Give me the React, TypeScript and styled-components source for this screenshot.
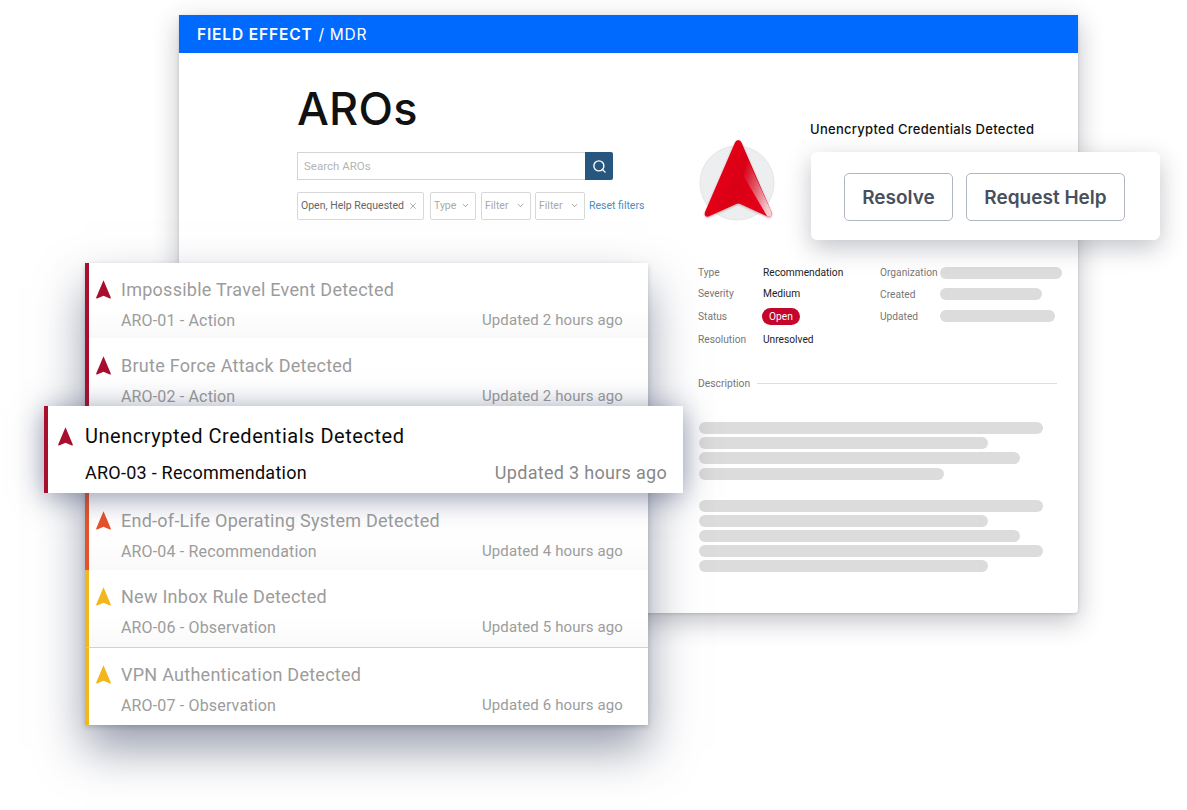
import React from "react";
import styled, { createGlobalStyle } from "styled-components";
import { ChevronDown, Search, X } from "lucide-react";

const Global = createGlobalStyle`
  html, body { margin: 0; padding: 0; background: #fff; }
  * { box-sizing: border-box; }
`;

const Page = styled.div`
  position: relative;
  width: 1187px;
  height: 810px;
  overflow: hidden;
  background: #fff;
  padding: 15px 0 0 179px;
  font-family: Roboto, "Liberation Sans", sans-serif;
`;

const Window = styled.section`
  position: relative;
  width: 899px;
  height: 598px;
  background: #fff;
  border-radius: 0 0 4px 4px;
  box-shadow: 0 8px 26px rgba(40, 44, 60, 0.3), 0 1px 3px rgba(40, 44, 60, 0.16);
`;

const Header = styled.header`
  height: 38px;
  background: #006aff;
  color: #fff;
  display: flex;
  align-items: center;
  gap: 6px;
  padding-left: 18px;
  font-family: Inter, sans-serif;
  font-size: 15.5px;
`;

const Brand = styled.span`
  font-weight: 600;
  letter-spacing: 0.85px;
`;

const Product = styled.span`
  font-weight: 400;
  letter-spacing: 0.7px;
`;

const Body = styled.div`
  display: flex;
  padding-left: 118px;
`;

const LeftColumn = styled.div`
  width: 401px;
  flex: none;
`;

const Title = styled.h1`
  margin: 27px 0 0;
  font-family: Inter, sans-serif;
  font-weight: 500;
  font-size: 45px;
  line-height: 58px;
  letter-spacing: 0.2px;
  color: #111;
`;

const SearchBar = styled.div`
  display: flex;
  width: 316px;
  height: 28px;
  margin-top: 14px;
`;

const SearchInput = styled.div`
  flex: 1;
  border: 1px solid #d4d4d4;
  border-right: 0;
  display: flex;
  align-items: center;
  padding-left: 6px;
  font-size: 11.5px;
  color: #b4b4b4;
`;

const SearchButton = styled.div`
  width: 28px;
  background: #27567f;
  border-radius: 0 2px 2px 0;
  color: #fff;
  display: flex;
  align-items: center;
  justify-content: center;
`;

const FilterRow = styled.div`
  display: flex;
  align-items: center;
  margin-top: 12px;
  height: 28px;
`;

const Dropdown = styled.div<{ $w: number; $gap: number; $active?: boolean }>`
  width: ${(p) => p.$w}px;
  margin-right: ${(p) => p.$gap}px;
  height: 28px;
  border: 1px solid #d8d8d8;
  border-radius: 2px;
  display: flex;
  align-items: center;
  justify-content: space-between;
  padding: 0 5px 1px 3px;
  font-size: 10.5px;
  color: ${(p) => (p.$active ? "#666" : "#a8a8a8")};
  white-space: nowrap;
  svg { color: #888; flex: none; }
`;

const ResetLink = styled.span`
  font-size: 10.5px;
  color: #4a8cc4;
  white-space: nowrap;
  padding-bottom: 1px;
`;

const RightColumn = styled.div`
  flex: 1;
  position: relative;
`;

const DetailHeading = styled.h2`
  margin: 68px 0 0 112px;
  font-family: Inter, sans-serif;
  font-size: 13px;
  line-height: 16px;
  font-weight: 500;
  letter-spacing: 0.28px;
  color: #111;
  white-space: nowrap;
`;

const Avatar = styled.svg`
  display: block;
  margin: 2px 0 0 0;
`;

const MetaGrid = styled.div`
  display: flex;
  margin-top: 38px;
`;

const MetaColumn = styled.div`
  width: 182px;
  display: flex;
  flex-direction: column;
`;

const MetaRow = styled.div<{ $h: number }>`
  height: ${(p) => p.$h}px;
  display: flex;
  align-items: center;
  font-size: 10.2px;
`;

const MetaLabel = styled.span<{ $w: number }>`
  width: ${(p) => p.$w}px;
  flex: none;
  color: #777;
`;

const MetaValue = styled.span`
  color: #222;
`;

const StatusPill = styled.span`
  height: 17px;
  margin-left: -1px;
  padding: 0 7px;
  border-radius: 9px;
  background: #c4062c;
  color: #fff;
  display: flex;
  align-items: center;
`;

const Skeleton = styled.div<{ $w: number }>`
  width: ${(p) => p.$w}px;
  height: 12px;
  border-radius: 6px;
  background: #dcdcdc;
`;

const DescriptionHeading = styled.div`
  display: flex;
  align-items: center;
  gap: 7px;
  width: 359px;
  margin-top: 25px;
  height: 14px;
  font-size: 10.3px;
  color: #777;
  &::after {
    content: "";
    flex: 1;
    height: 1px;
    background: #dedede;
  }
`;

const SkeletonGroup = styled.div<{ $top: number }>`
  margin: ${(p) => p.$top}px 0 0 1px;
  display: flex;
  flex-direction: column;
  gap: 3.2px;
`;

const ActionCard = styled.div`
  position: absolute;
  left: 632px;
  top: 137px;
  width: 349px;
  height: 88px;
  background: #fff;
  border-radius: 6px;
  box-shadow: 0 8px 24px rgba(40, 44, 60, 0.28);
  display: flex;
  align-items: center;
  gap: 13px;
  padding: 2px 0 0 33px;
`;

const ActionButton = styled.div<{ $w: number }>`
  width: ${(p) => p.$w}px;
  height: 48px;
  border: 1px solid #b0b6bf;
  border-radius: 5px;
  display: flex;
  align-items: center;
  justify-content: center;
  font-family: Inter, sans-serif;
  font-size: 19px;
  font-weight: 600;
  color: #47505e;
`;

const List = styled.div`
  position: absolute;
  left: 85px;
  top: 263px;
  width: 563px;
  display: flex;
  flex-direction: column;
  background: #fff;
  box-shadow: 0 24px 44px rgba(50, 60, 90, 0.5), 0 2px 5px rgba(50, 60, 90, 0.24);
`;

const Row = styled.div<{ $h: number; $bar: string; $top: number; $tint?: boolean; $rule?: boolean }>`
  height: ${(p) => p.$h}px;
  border-left: 4px solid ${(p) => p.$bar};
  border-top: ${(p) => (p.$rule ? "1px solid #d2d2d2" : "0")};
  background: ${(p) => (p.$tint ? "linear-gradient(#fff 60%, #f9f9f9)" : "#fff")};
  display: grid;
  grid-template-columns: 25px 1fr auto;
  grid-template-rows: 31px 30px;
  align-content: start;
  align-items: center;
  padding: ${(p) => p.$top}px 25px 0 7px;
  color: #9c9c9c;
`;

const SelectedRow = styled.div`
  position: relative;
  z-index: 2;
  height: 87px;
  margin: -9px -35px 0 -41px;
  border-left: 4px solid #a80f2f;
  background: #fff;
  display: grid;
  grid-template-columns: 27px 1fr auto;
  grid-template-rows: 36px 36px;
  align-content: start;
  align-items: center;
  padding: 12px 16px 0 10px;
  box-shadow: 0 4px 28px rgba(50, 60, 100, 0.55);
`;

const RowTitle = styled.div`
  grid-column: 2 / 4;
  font-size: 18px;
  letter-spacing: 0.26px;
`;

const RowSub = styled.div`
  grid-column: 2;
  font-size: 16px;
  letter-spacing: 0.16px;
`;

const RowTime = styled.div`
  grid-column: 3;
  font-size: 15px;
  letter-spacing: 0.12px;
`;

const SelectedTitle = styled.div`
  grid-column: 2 / 4;
  font-size: 20px;
  letter-spacing: 0.53px;
  color: #0a0a0a;
`;

const SelectedSub = styled.div`
  grid-column: 2;
  font-size: 18px;
  letter-spacing: 0.25px;
  color: #0a0a0a;
`;

const SelectedTime = styled.div`
  grid-column: 3;
  font-size: 18px;
  letter-spacing: 0.3px;
  color: #888;
`;

const ArrowSvg = styled.svg`
  display: block;
`;

const Arrow = ({ color }: { color: string }) => (
  <ArrowSvg width="15" height="19" viewBox="0 0 15 19">
    <path
      d="M7.5 0.3 L14.8 17.6 Q15 18.8 13.9 18.4 L8 15.9 Q7.5 15.7 7 15.9 L1.1 18.4 Q0 18.8 0.2 17.6 Z"
      fill={color}
    />
  </ArrowSvg>
);

const DARK = "#a80f2f";
const ORANGE = "#e5532a";
const YELLOW = "#f2b71c";

const META_LEFT: [string, React.ReactNode, number][] = [
  ["Type", <MetaValue>Recommendation</MetaValue>, 20],
  ["Severity", <MetaValue>Medium</MetaValue>, 23],
  ["Status", <StatusPill>Open</StatusPill>, 23],
  ["Resolution", <MetaValue>Unresolved</MetaValue>, 23],
];

const META_RIGHT: [string, number, number][] = [
  ["Organization", 123, 21],
  ["Created", 102, 22],
  ["Updated", 115, 22],
];

const FIRST_BLOCK = [344, 289, 321, 245];
const SECOND_BLOCK = [344, 289, 321, 344, 289];

export default function App() {
  return (
    <Page>
      <Global />
      <Window>
        <Header>
          <Brand>FIELD EFFECT</Brand>
          <Product>/ MDR</Product>
        </Header>
        <Body>
          <LeftColumn>
            <Title>AROs</Title>
            <SearchBar>
              <SearchInput>Search AROs</SearchInput>
              <SearchButton>
                <Search size={15} strokeWidth={2.2} />
              </SearchButton>
            </SearchBar>
            <FilterRow>
              <Dropdown $w={127} $gap={6} $active>
                Open, Help Requested
                <X size={10} strokeWidth={1.6} />
              </Dropdown>
              <Dropdown $w={46} $gap={5}>
                Type
                <ChevronDown size={9} />
              </Dropdown>
              <Dropdown $w={50} $gap={4}>
                Filter
                <ChevronDown size={9} />
              </Dropdown>
              <Dropdown $w={50} $gap={4}>
                Filter
                <ChevronDown size={9} />
              </Dropdown>
              <ResetLink>Reset filters</ResetLink>
            </FilterRow>
          </LeftColumn>
          <RightColumn>
            <DetailHeading>Unencrypted Credentials Detected</DetailHeading>
            <Avatar width="80" height="85" viewBox="0 0 80 85">
              <defs>
                <linearGradient id="arrowMain" x1="0" y1="0" x2="1" y2="0.4">
                  <stop offset="0" stopColor="#f40a1e" />
                  <stop offset="0.62" stopColor="#d80014" />
                  <stop offset="1" stopColor="#e4001a" />
                </linearGradient>
                <linearGradient id="arrowShine" x1="0.1" y1="0.25" x2="0.95" y2="0.75">
                  <stop offset="0" stopColor="#da0018" />
                  <stop offset="0.5" stopColor="#e0606e" />
                  <stop offset="1" stopColor="#f6ccd0" />
                </linearGradient>
                <filter id="arrowShadow" x="-20%" y="-20%" width="140%" height="140%">
                  <feDropShadow dx="0" dy="1" stdDeviation="1.2" floodColor="#801018" floodOpacity="0.35" />
                </filter>
              </defs>
              <circle cx="39" cy="44" r="37" fill="#eceef0" stroke="#e4e6e8" />
              <g filter="url(#arrowShadow)">
                <path
                  d="M40.300 1 Q42.500 1 43.500 3.500 L73.500 73 Q74.500 78.500 69.500 77.500 L42.300 65 Q40.300 64 38.300 65 L10.500 77.500 Q5.500 78.500 7 73 L37 3.500 Q38 1 40.300 1 Z"
                  fill="url(#arrowMain)"
                />
                <path
                  d="M48.700 18.500 L73.500 73 Q74.500 78.500 69.500 77.500 L69 77 L42 31 Z"
                  fill="url(#arrowShine)"
                />
              </g>
            </Avatar>
            <MetaGrid>
              <MetaColumn>
                {META_LEFT.map(([label, value, h]) => (
                  <MetaRow key={label} $h={h}>
                    <MetaLabel $w={65}>{label}</MetaLabel>
                    {value}
                  </MetaRow>
                ))}
              </MetaColumn>
              <MetaColumn>
                {META_RIGHT.map(([label, w, h]) => (
                  <MetaRow key={label} $h={h}>
                    <MetaLabel $w={60}>{label}</MetaLabel>
                    <Skeleton $w={w} />
                  </MetaRow>
                ))}
              </MetaColumn>
            </MetaGrid>
            <DescriptionHeading>Description</DescriptionHeading>
            <SkeletonGroup $top={32}>
              {FIRST_BLOCK.map((w, i) => (
                <Skeleton key={i} $w={w} />
              ))}
            </SkeletonGroup>
            <SkeletonGroup $top={20}>
              {SECOND_BLOCK.map((w, i) => (
                <Skeleton key={i} $w={w} />
              ))}
            </SkeletonGroup>
          </RightColumn>
        </Body>
        <ActionCard>
          <ActionButton $w={109}>Resolve</ActionButton>
          <ActionButton $w={159}>Request Help</ActionButton>
        </ActionCard>
      </Window>
      <List>
        <Row $h={75} $bar={DARK} $top={11} $tint>
          <Arrow color={DARK} />
          <RowTitle>Impossible Travel Event Detected</RowTitle>
          <RowSub>ARO-01 - Action</RowSub>
          <RowTime>Updated 2 hours ago</RowTime>
        </Row>
        <Row $h={77} $bar={DARK} $top={12}>
          <Arrow color={DARK} />
          <RowTitle>Brute Force Attack Detected</RowTitle>
          <RowSub>ARO-02 - Action</RowSub>
          <RowTime>Updated 2 hours ago</RowTime>
        </Row>
        <SelectedRow>
          <Arrow color={DARK} />
          <SelectedTitle>Unencrypted Credentials Detected</SelectedTitle>
          <SelectedSub>ARO-03 - Recommendation</SelectedSub>
          <SelectedTime>Updated 3 hours ago</SelectedTime>
        </SelectedRow>
        <Row $h={77} $bar={ORANGE} $top={12} $tint>
          <Arrow color={ORANGE} />
          <RowTitle>End-of-Life Operating System Detected</RowTitle>
          <RowSub>ARO-04 - Recommendation</RowSub>
          <RowTime>Updated 4 hours ago</RowTime>
        </Row>
        <Row $h={77} $bar={YELLOW} $top={11} $tint>
          <Arrow color={YELLOW} />
          <RowTitle>New Inbox Rule Detected</RowTitle>
          <RowSub>ARO-06 - Observation</RowSub>
          <RowTime>Updated 5 hours ago</RowTime>
        </Row>
        <Row $h={78} $bar={YELLOW} $top={11} $rule>
          <Arrow color={YELLOW} />
          <RowTitle>VPN Authentication Detected</RowTitle>
          <RowSub>ARO-07 - Observation</RowSub>
          <RowTime>Updated 6 hours ago</RowTime>
        </Row>
      </List>
    </Page>
  );
}
